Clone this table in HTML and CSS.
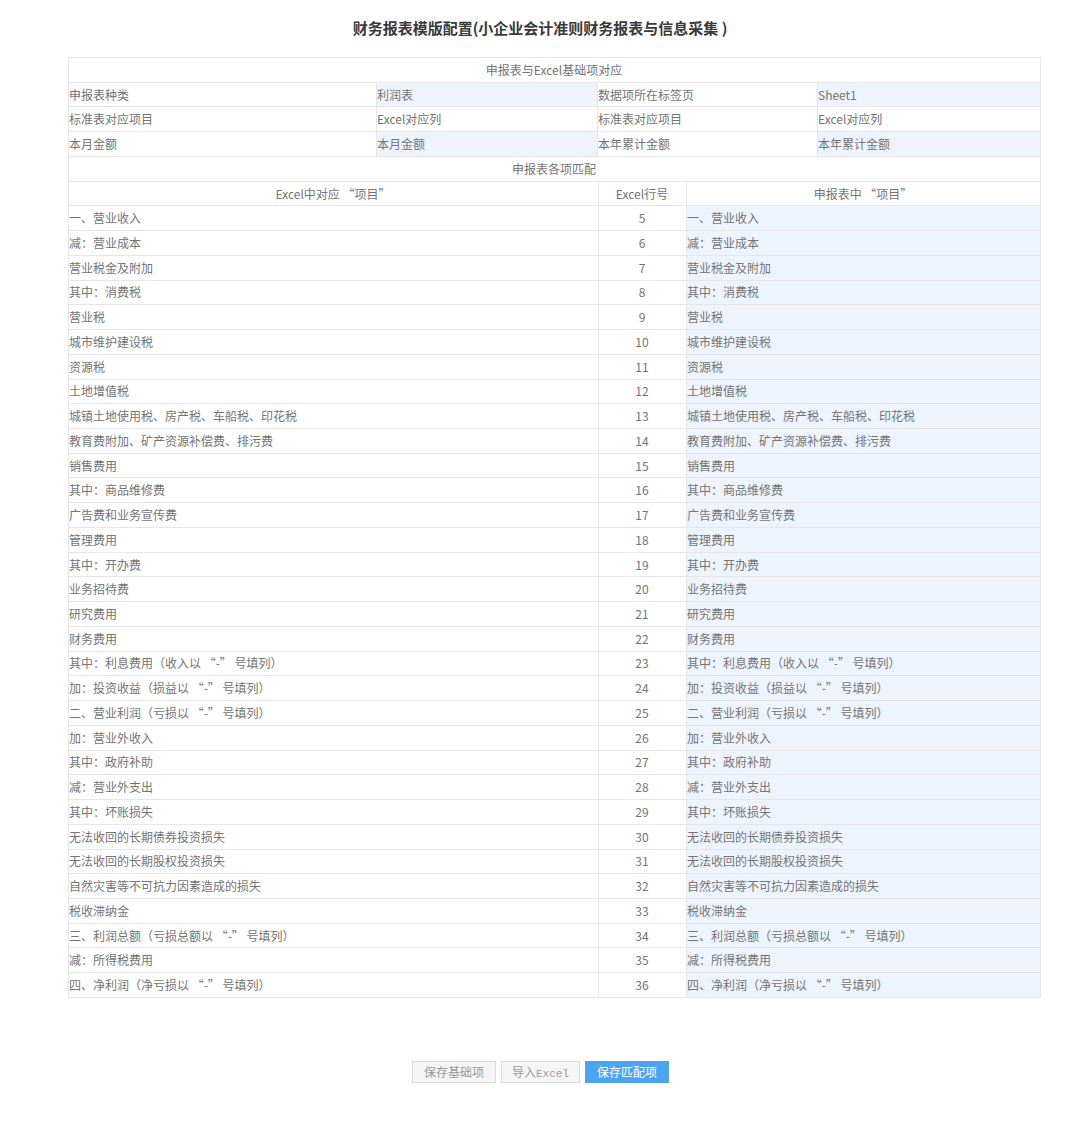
FILE: index.html
```html
<!DOCTYPE html>
<html lang="zh-CN">
<head>
<meta charset="utf-8">
<title>财务报表模版配置</title>
<link rel="stylesheet" href="styles.css">
</head>
<body>
<div class="page">
  <h1 class="title">财务报表模版配置(小企业会计准则财务报表与信息采集 )</h1>
  <table class="grid top">
    <colgroup><col class="c1"><col class="c2"><col class="c3"><col class="c4"></colgroup>
    <tr><td colspan="4" class="center">申报表与Excel基础项对应</td></tr>
    <tr><td>申报表种类</td><td class="blue">利润表</td><td>数据项所在标签页</td><td class="blue">Sheet1</td></tr>
    <tr><td>标准表对应项目</td><td>Excel对应列</td><td>标准表对应项目</td><td>Excel对应列</td></tr>
    <tr><td>本月金额</td><td class="blue">本月金额</td><td>本年累计金额</td><td class="blue">本年累计金额</td></tr>
  </table>
  <table class="grid bottom">
    <colgroup><col class="d1"><col class="d2"><col class="d3"></colgroup>
    <tr><td colspan="3" class="center">申报表各项匹配</td></tr>
    <tr><td class="center">Excel中对应 “项目”</td><td class="center">Excel行号</td><td class="center">申报表中 “项目”</td></tr>
    <tr><td>一、营业收入</td><td class="center">5</td><td class="blue">一、营业收入</td></tr>
    <tr><td>减：营业成本</td><td class="center">6</td><td class="blue">减：营业成本</td></tr>
    <tr><td>营业税金及附加</td><td class="center">7</td><td class="blue">营业税金及附加</td></tr>
    <tr><td>其中：消费税</td><td class="center">8</td><td class="blue">其中：消费税</td></tr>
    <tr><td>营业税</td><td class="center">9</td><td class="blue">营业税</td></tr>
    <tr><td>城市维护建设税</td><td class="center">10</td><td class="blue">城市维护建设税</td></tr>
    <tr><td>资源税</td><td class="center">11</td><td class="blue">资源税</td></tr>
    <tr><td>土地增值税</td><td class="center">12</td><td class="blue">土地增值税</td></tr>
    <tr><td>城镇土地使用税、房产税、车船税、印花税</td><td class="center">13</td><td class="blue">城镇土地使用税、房产税、车船税、印花税</td></tr>
    <tr><td>教育费附加、矿产资源补偿费、排污费</td><td class="center">14</td><td class="blue">教育费附加、矿产资源补偿费、排污费</td></tr>
    <tr><td>销售费用</td><td class="center">15</td><td class="blue">销售费用</td></tr>
    <tr><td>其中：商品维修费</td><td class="center">16</td><td class="blue">其中：商品维修费</td></tr>
    <tr><td>广告费和业务宣传费</td><td class="center">17</td><td class="blue">广告费和业务宣传费</td></tr>
    <tr><td>管理费用</td><td class="center">18</td><td class="blue">管理费用</td></tr>
    <tr><td>其中：开办费</td><td class="center">19</td><td class="blue">其中：开办费</td></tr>
    <tr><td>业务招待费</td><td class="center">20</td><td class="blue">业务招待费</td></tr>
    <tr><td>研究费用</td><td class="center">21</td><td class="blue">研究费用</td></tr>
    <tr><td>财务费用</td><td class="center">22</td><td class="blue">财务费用</td></tr>
    <tr><td>其中：利息费用（收入以 “-” 号填列）</td><td class="center">23</td><td class="blue">其中：利息费用（收入以 “-” 号填列）</td></tr>
    <tr><td>加：投资收益（损益以 “-” 号填列）</td><td class="center">24</td><td class="blue">加：投资收益（损益以 “-” 号填列）</td></tr>
    <tr><td>二、营业利润（亏损以 “-” 号填列）</td><td class="center">25</td><td class="blue">二、营业利润（亏损以 “-” 号填列）</td></tr>
    <tr><td>加：营业外收入</td><td class="center">26</td><td class="blue">加：营业外收入</td></tr>
    <tr><td>其中：政府补助</td><td class="center">27</td><td class="blue">其中：政府补助</td></tr>
    <tr><td>减：营业外支出</td><td class="center">28</td><td class="blue">减：营业外支出</td></tr>
    <tr><td>其中：坏账损失</td><td class="center">29</td><td class="blue">其中：坏账损失</td></tr>
    <tr><td>无法收回的长期债券投资损失</td><td class="center">30</td><td class="blue">无法收回的长期债券投资损失</td></tr>
    <tr><td>无法收回的长期股权投资损失</td><td class="center">31</td><td class="blue">无法收回的长期股权投资损失</td></tr>
    <tr><td>自然灾害等不可抗力因素造成的损失</td><td class="center">32</td><td class="blue">自然灾害等不可抗力因素造成的损失</td></tr>
    <tr><td>税收滞纳金</td><td class="center">33</td><td class="blue">税收滞纳金</td></tr>
    <tr><td>三、利润总额（亏损总额以 “-” 号填列）</td><td class="center">34</td><td class="blue">三、利润总额（亏损总额以 “-” 号填列）</td></tr>
    <tr><td>减：所得税费用</td><td class="center">35</td><td class="blue">减：所得税费用</td></tr>
    <tr><td>四、净利润（净亏损以 “-” 号填列）</td><td class="center">36</td><td class="blue">四、净利润（净亏损以 “-” 号填列）</td></tr>
  </table>
  <div class="actions">
    <button class="btn">保存基础项</button>
    <button class="btn narrow">导入<span class="mono">Excel</span></button>
    <button class="btn primary">保存匹配项</button>
  </div>
</div>
</body>
</html>
```

FILE: styles.css
```css
html, body {
  margin: 0;
  padding: 0;
  background: #ffffff;
}
body {
  font-family: "Noto Sans CJK SC", "Microsoft YaHei", "Noto Sans", sans-serif;
  color: #747474;
  font-size: 12px;
}
.page {
  width: 1080px;
  padding-bottom: 40px;
}
.title {
  margin: 0;
  height: 57px;
  line-height: 56px;
  font-size: 15px;
  font-weight: bold;
  color: #3a3a3a;
  text-align: center;
}
.grid {
  margin-left: 68px;
  width: 972px;
  border-collapse: collapse;
  table-layout: fixed;
}
.grid td {
  border: 1px solid #e6e6e6;
  height: 23.74px;
  padding: 0 1px 0 0;
  line-height: 16px;
  vertical-align: middle;
  white-space: nowrap;
  overflow: hidden;
}
.grid.bottom tr:first-child td {
  border-top: none;
}
.c1 { width: 308px; }
.c2 { width: 221px; }
.c3 { width: 220px; }
.c4 { width: 223px; }
.d1 { width: 530px; }
.d2 { width: 88px; }
.d3 { width: 354px; }
.center {
  text-align: center;
}
.blue {
  background: #eef4fd;
}
.actions {
  display: flex;
  justify-content: center;
  gap: 5px;
  margin-top: 63px;
  padding-left: 1px;
}
.btn {
  height: 22px;
  padding: 0 11px;
  border: 1px solid #dddddd;
  background: #f5f5f5;
  color: #9a9a9a;
  font-family: "Noto Sans CJK SC", "Microsoft YaHei", sans-serif;
  font-size: 12px;
  line-height: 20px;
  cursor: pointer;
}
.btn.narrow {
  padding: 0 10px;
}
.mono {
  font-family: "Liberation Mono", "DejaVu Sans Mono", monospace;
  font-size: 11px;
}
.btn.primary {
  background: #4ca3ef;
  border-color: #4ca3ef;
  color: #ffffff;
}
```
